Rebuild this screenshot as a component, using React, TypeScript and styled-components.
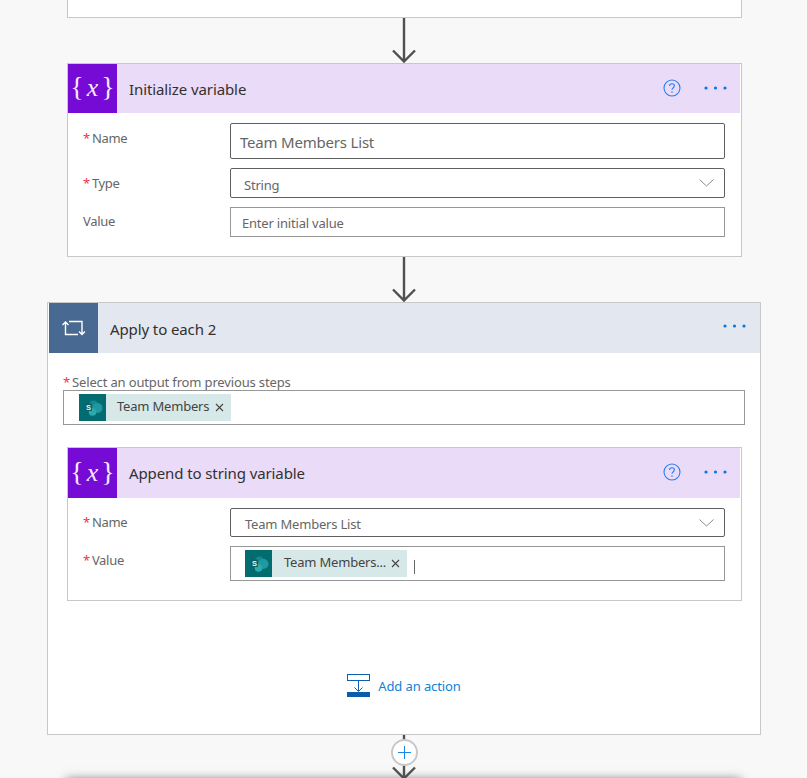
import React from 'react';
import styled, { createGlobalStyle } from 'styled-components';

const Global = createGlobalStyle`
  html, body { margin: 0; padding: 0; background: #f8f8f8; }
  body { font-family: "Noto Sans", "Open Sans", sans-serif; }
`;

const Page = styled.div`
  width: 807px;
  height: 778px;
  overflow: hidden;
  background: #f8f8f8;
  padding-left: 47px;
  box-sizing: border-box;
`;
const Column = styled.div`
  width: 714px;
  display: flex;
  flex-direction: column;
  align-items: flex-start;
`;
const Card = styled.section<{ $inset?: number; $height: number }>`
  box-sizing: border-box;
  width: 675px;
  height: ${p => p.$height}px;
  margin-left: ${p => p.$inset ?? 20}px;
  background: #fff;
  border: 1px solid #c8c8c8;
  flex: none;
`;
const TopStub = styled(Card)`
  border-top: 0;
`;
const Loop = styled.section`
  box-sizing: border-box;
  width: 714px;
  height: 433px;
  background: #fff;
  border: 1px solid #c8c8c8;
  flex: none;
`;
const Header = styled.header<{ $bg: string; $gapLeft?: number; $gapRight?: number; $h?: number }>`
  height: ${p => p.$h ?? 49}px;
  margin-left: ${p => p.$gapLeft ?? 0}px;
  margin-right: ${p => p.$gapRight ?? 0}px;
  background: ${p => p.$bg};
  display: flex;
  align-items: center;
`;
const IconTile = styled.div<{ $bg: string }>`
  width: 49px;
  height: 100%;
  background: ${p => p.$bg};
  color: #fff;
  display: flex;
  align-items: center;
  justify-content: center;
  flex: none;
`;
const VarGlyph = styled.span`
  font-family: "Liberation Serif", serif;
  font-size: 28px;
  line-height: 1;
  color: rgba(255, 255, 255, 0.92);
  margin-top: -3px;
  white-space: nowrap;
  font-weight: 400;
  i { font-size: 26px; margin: 0 3px; }
`;
const Title = styled.h2<{ $drop: number }>`
  margin: ${p => p.$drop}px 0 0 12px;
  font-size: 15px;
  font-weight: 400;
  color: #323130;
  flex: 1;
  line-height: 20px;
  letter-spacing: -0.1px;
`;
const HeaderActions = styled.div<{ $right: number; $lift?: number }>`
  display: flex;
  align-items: center;
  margin-right: ${p => p.$right}px;
  margin-top: -${p => p.$lift ?? 2}px;
`;
const HelpIcon = styled.svg`
  display: block;
  margin-right: 23px;
`;
const Form = styled.div<{ $top: number }>`
  padding: ${p => p.$top}px 15px 0 15px;
  display: flex;
  flex-direction: column;
  gap: 9px;
`;
const Row = styled.div`
  display: grid;
  grid-template-columns: 147px 495px;
`;
const Label = styled.label<{ $top?: number }>`
  font-size: 13px;
  line-height: 18px;
  color: #666;
  padding-top: ${p => p.$top ?? 5}px;
  letter-spacing: -0.3px;
`;
const Star = styled.span`
  color: #e8384f;
  margin-right: 2px;
`;
const Field = styled.div<{ $h: number; $strong?: boolean; $pad: number; $size?: number }>`
  box-sizing: border-box;
  height: ${p => p.$h}px;
  border: 1px solid ${p => (p.$strong ? '#5f5f5f' : '#979797')};
  border-radius: ${p => (p.$strong ? 2 : 0)}px;
  padding-left: ${p => p.$pad}px;
  display: flex;
  align-items: center;
  justify-content: space-between;
  font-size: ${p => p.$size ?? 13}px;
  color: #555;
  background: #fff;
  letter-spacing: -0.2px;
`;
const Muted = styled.span<{ $drop?: number }>`
  color: #666;
  position: relative;
  top: ${p => p.$drop ?? 1}px;
`;
const Chevron = styled.svg`
  margin-right: 10px;
  flex: none;
`;
const TokenField = styled.div<{ $h: number; $pad: number }>`
  box-sizing: border-box;
  height: ${p => p.$h}px;
  border: 1px solid #979797;
  padding-left: ${p => p.$pad}px;
  display: flex;
  align-items: center;
  background: #fff;
`;
const Token = styled.div<{ $w: number }>`
  width: ${p => p.$w}px;
  height: 27px;
  background: #d7e8e8;
  display: flex;
  align-items: center;
  font-size: 13px;
  color: #444;
  flex: none;
  letter-spacing: -0.2px;
`;
const TokenIcon = styled.div`
  width: 27px;
  height: 27px;
  background: #036c70;
  flex: none;
  display: flex;
`;
const TokenText = styled.span<{ $left: number }>`
  margin-left: ${p => p.$left}px;
  flex: 1;
  white-space: nowrap;
  margin-top: -4px;
`;
const Close = styled.svg`
  margin-right: 7px;
  flex: none;
`;
const Caret = styled.span`
  width: 1px;
  height: 14px;
  background: #666;
  margin: 6px 0 0 7px;
`;
const LoopBody = styled.div`
  padding: 21px 15px 0 15px;
`;
const LoopLabel = styled.label`
  display: block;
  font-size: 13px;
  line-height: 17px;
  color: #666;
  margin-bottom: -1px;
  height: 17px;
  letter-spacing: -0.15px;
`;
const NestedWrap = styled.div`
  margin: 22px 0 0 4px;
`;
const NestedCard = styled(Card)`
  margin-left: 0;
`;
const AddAction = styled.div`
  margin: 73px 0 0 0;
  display: flex;
  align-items: center;
  justify-content: center;
  gap: 8px;
  font-size: 13px;
  color: #0f7fd8;
  height: 23px;
  letter-spacing: -0.1px;
`;
const ConnectorWrap = styled.div`
  position: relative;
  width: 714px;
  height: 45px;
  flex: none;
  z-index: 2;
`;
const ConnectorSvg = styled.svg`
  display: block;
`;
const PlusCircle = styled.div`
  position: absolute;
  left: 344px;
  top: 4px;
  width: 27px;
  height: 27px;
  box-sizing: border-box;
  border-radius: 50%;
  border: 2px solid #c8c8c8;
  background: #fff;
  display: flex;
  align-items: center;
  justify-content: center;
`;
const NextCard = styled.div`
  width: 675px;
  height: 40px;
  margin-left: 19px;
  background: #fff;
  box-shadow: 0 0 10px rgba(0, 0, 0, 0.6);
  flex: none;
`;

function Connector({ plus }: { plus?: boolean }) {
  return (
    <ConnectorWrap>
      <ConnectorSvg width="714" height="45" viewBox="0 0 714 45">
        <path d="M357 0V43.5M346 32.5L357 43.5L368 32.5" fill="none" stroke="#505050" strokeWidth="2.4" />
      </ConnectorSvg>
      {plus && (
        <PlusCircle>
          <svg width="13" height="13" viewBox="0 0 13 13">
            <path d="M6.5 0V13M0 6.5H13" stroke="#1b87e6" strokeWidth="1" />
          </svg>
        </PlusCircle>
      )}
    </ConnectorWrap>
  );
}

function Dots() {
  return (
    <svg width="23" height="4" viewBox="0 0 23 4">
      <circle cx="2" cy="2" r="1.6" fill="#0a78e0" />
      <circle cx="11.5" cy="2" r="1.6" fill="#0a78e0" />
      <circle cx="21" cy="2" r="1.6" fill="#0a78e0" />
    </svg>
  );
}

function Help() {
  return (
    <HelpIcon width="18" height="18" viewBox="0 0 18 18">
      <circle cx="9" cy="9" r="8" fill="none" stroke="#2b7cf0" strokeWidth="1.1" />
      <path d="M6.6 7.1C6.6 5.7 7.7 4.8 9 4.8C10.3 4.8 11.4 5.7 11.4 7C11.4 8.7 9 8.8 9 10.8" fill="none" stroke="#2b7cf0" strokeWidth="1.1" />
      <circle cx="9" cy="13" r="0.8" fill="#2b7cf0" />
    </HelpIcon>
  );
}

function SharePoint() {
  return (
    <svg width="27" height="27" viewBox="0 0 27 27">
      <circle cx="14.5" cy="11" r="4.5" fill="#16888d" />
      <circle cx="18.5" cy="14" r="5" fill="#1c9aa0" />
      <circle cx="13.5" cy="18" r="3.8" fill="#2aa9ae" />
      <rect x="6" y="9.5" width="7" height="7.5" rx="1" fill="#0b5f63" />
      <text x="9.5" y="15.6" fontSize="7.5" fontWeight="700" fill="#e8f4f4" textAnchor="middle" fontFamily="Liberation Sans, sans-serif">S</text>
    </svg>
  );
}

function X() {
  return (
    <Close width="9" height="9" viewBox="0 0 9 9">
      <path d="M1 1L8 8M8 1L1 8" stroke="#444" strokeWidth="1.1" />
    </Close>
  );
}

function Down() {
  return (
    <Chevron width="15" height="8" viewBox="0 0 15 8">
      <path d="M0.5 0.5L7.5 7L14.5 0.5" fill="none" stroke="#8a8a8a" strokeWidth="1" />
    </Chevron>
  );
}

function VarTile() {
  return (
    <IconTile $bg="#770bd6">
      <VarGlyph>{'{'}<i>x</i>{'}'}</VarGlyph>
    </IconTile>
  );
}

export default function App() {
  return (
    <Page>
      <Global />
      <Column>
        <TopStub $height={18} />
        <Connector />
        <Card $height={194}>
          <Header $bg="#eadbf8" $gapRight={1}>
            <VarTile />
            <Title $drop={1}>Initialize variable</Title>
            <HeaderActions $right={13}>
              <Help />
              <Dots />
            </HeaderActions>
          </Header>
          <Form $top={10}>
            <Row>
              <Label $top={6}><Star>*</Star>Name</Label>
              <Field $h={36} $strong $pad={9} $size={15}><Muted>Team Members List</Muted></Field>
            </Row>
            <Row>
              <Label $top={6}><Star>*</Star>Type</Label>
              <Field $h={30} $strong $pad={13}>
                <Muted $drop={2}>String</Muted>
                <Down />
              </Field>
            </Row>
            <Row>
              <Label $top={5}>Value</Label>
              <Field $h={30} $pad={11}>
                <Muted>Enter initial value</Muted>
              </Field>
            </Row>
          </Form>
        </Card>
        <Connector />
        <Loop>
          <Header $bg="#e3e7ef" $gapLeft={1} $h={50}>
            <IconTile $bg="#486991">
              <svg width="25" height="19" viewBox="0 0 25 19">
                <path d="M4.5 3.5V15.5H17M8 2.5H21V15.5M1.5 6L4.5 3L7.5 6M18 12.5L21 15.5L24 12.5" fill="none" stroke="#fff" strokeWidth="1.4" />
              </svg>
            </IconTile>
            <Title $drop={2}>Apply to each 2</Title>
            <HeaderActions $right={14} $lift={4}>
              <Dots />
            </HeaderActions>
          </Header>
          <LoopBody>
            <LoopLabel><Star>*</Star>Select an output from previous steps</LoopLabel>
            <TokenField $h={35} $pad={15}>
              <Token $w={152}>
                <TokenIcon><SharePoint /></TokenIcon>
                <TokenText $left={11}>Team Members</TokenText>
                <X />
              </Token>
            </TokenField>
            <NestedWrap>
              <NestedCard $height={154}>
                <Header $bg="#eadbf8" $gapRight={1} $h={50}>
                  <VarTile />
                  <Title $drop={0}>Append to string variable</Title>
                  <HeaderActions $right={13}>
                    <Help />
                    <Dots />
                  </HeaderActions>
                </Header>
                <Form $top={10}>
                  <Row>
                    <Label $top={5}><Star>*</Star>Name</Label>
                    <Field $h={29} $strong $pad={14}>
                      <Muted>Team Members List</Muted>
                      <Down />
                    </Field>
                  </Row>
                  <Row>
                    <Label $top={5}><Star>*</Star>Value</Label>
                    <TokenField $h={35} $pad={14}>
                      <Token $w={162}>
                        <TokenIcon><SharePoint /></TokenIcon>
                        <TokenText $left={12}>Team Members...</TokenText>
                        <X />
                      </Token>
                      <Caret />
                    </TokenField>
                  </Row>
                </Form>
              </NestedCard>
            </NestedWrap>
            <AddAction>
              <svg width="23" height="23" viewBox="0 0 23 23">
                <rect x="0.5" y="0.5" width="22" height="6" fill="#fff" stroke="#0f5fb0" />
                <path d="M11.5 7V17M7.5 13.5L11.5 17.5L15.5 13.5" fill="none" stroke="#0f5fb0" strokeWidth="1" />
                <rect x="0" y="18" width="23" height="5" fill="#0a5cad" />
              </svg>
              <span>Add an action</span>
            </AddAction>
          </LoopBody>
        </Loop>
        <Connector plus />
        <NextCard />
      </Column>
    </Page>
  );
}
